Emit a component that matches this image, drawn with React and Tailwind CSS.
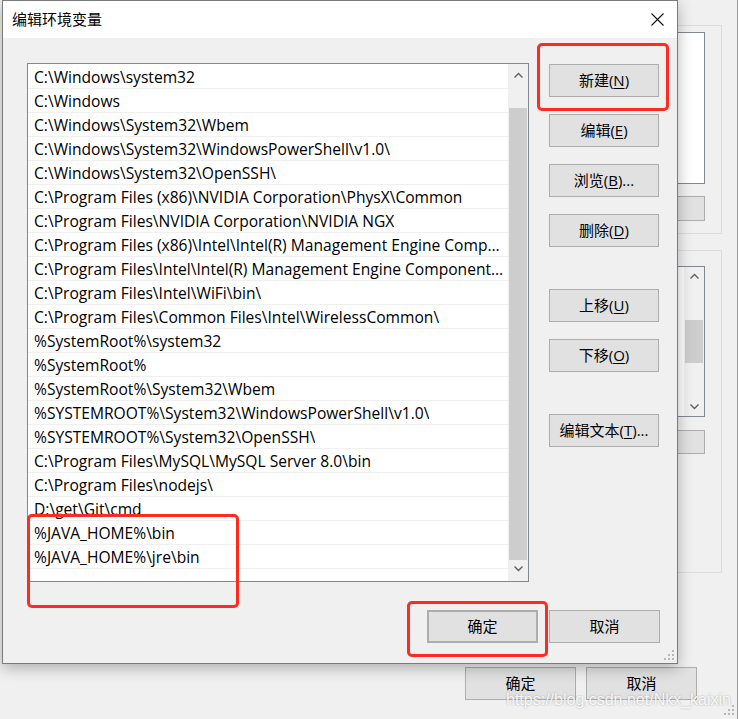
import { useState } from "react";

const paths = [
  "C:\\Windows\\system32",
  "C:\\Windows",
  "C:\\Windows\\System32\\Wbem",
  "C:\\Windows\\System32\\WindowsPowerShell\\v1.0\\",
  "C:\\Windows\\System32\\OpenSSH\\",
  "C:\\Program Files (x86)\\NVIDIA Corporation\\PhysX\\Common",
  "C:\\Program Files\\NVIDIA Corporation\\NVIDIA NGX",
  "C:\\Program Files (x86)\\Intel\\Intel(R) Management Engine Components\\DAL",
  "C:\\Program Files\\Intel\\Intel(R) Management Engine Components\\DAL",
  "C:\\Program Files\\Intel\\WiFi\\bin\\",
  "C:\\Program Files\\Common Files\\Intel\\WirelessCommon\\",
  "%SystemRoot%\\system32",
  "%SystemRoot%",
  "%SystemRoot%\\System32\\Wbem",
  "%SYSTEMROOT%\\System32\\WindowsPowerShell\\v1.0\\",
  "%SYSTEMROOT%\\System32\\OpenSSH\\",
  "C:\\Program Files\\MySQL\\MySQL Server 8.0\\bin",
  "C:\\Program Files\\nodejs\\",
  "D:\\get\\Git\\cmd",
  "%JAVA_HOME%\\bin",
  "%JAVA_HOME%\\jre\\bin",
  "",
];

// chevrons used on the scroll bars
const Chevron = ({ down }) => (
  <svg width="9" height="6" viewBox="0 0 9 6" className="block">
    <polyline
      points={down ? "0.5,0.5 4.5,4.5 8.5,0.5" : "0.5,5.5 4.5,1.5 8.5,5.5"}
      fill="none"
      stroke="#606060"
      strokeWidth="1.4"
    />
  </svg>
);

const Grip = () => (
  <svg width="11" height="11" viewBox="0 0 11 11" className="block">
    <rect x="8" y="0" width="2" height="2" fill="#b8b8b8" />
    <rect x="4" y="4" width="2" height="2" fill="#b8b8b8" />
    <rect x="8" y="4" width="2" height="2" fill="#b8b8b8" />
    <rect x="0" y="8" width="2" height="2" fill="#b8b8b8" />
    <rect x="4" y="8" width="2" height="2" fill="#b8b8b8" />
    <rect x="8" y="8" width="2" height="2" fill="#b8b8b8" />
  </svg>
);

const WinButton = ({ children, className = "" }) => (
  <button
    className={`flex items-center justify-center bg-[#e1e1e1] border border-[#adadad] text-[15px] text-black ${className}`}
  >
    {children}
  </button>
);

const Mn = ({ children }) => <span className="underline underline-offset-2">{children}</span>;

const App = () => {
  const [selected] = useState(null);

  return (
    <div className="relative w-[738px] h-[719px] overflow-hidden bg-[#f0f0f0] font-['Open_Sans','Noto_Sans_CJK_SC',sans-serif]">
      {/* Background window (system properties) */}
      <div className="flex h-full flex-col items-end pr-[15px] pt-[25px] border-r border-[#9a9a9a]">
        <div className="flex w-[320px] h-[209px] flex-col items-end border border-[#dcdcdc] pt-[6px] pr-[16px]">
          <div className="w-[290px] h-[152px] border border-[#828790] bg-white" />
          <div className="mt-[12px] w-[100px] h-[25px] bg-[#e1e1e1] border border-[#adadad]" />
        </div>
        <div className="mt-[16px] flex w-[320px] h-[323px] flex-col items-end border border-[#dcdcdc] pt-[15px] pr-[16px]">
          <div className="flex w-[290px] h-[151px] justify-end border border-[#828790] bg-white">
            <div className="flex w-[20px] flex-col items-center bg-[#f0f0f0]">
              <div className="pt-[6px] h-[17px]">
                <Chevron />
              </div>
              <div className="mt-[36px] w-[18px] h-[43px] bg-[#cdcdcd]" />
              <div className="mt-auto pb-[6px]">
                <Chevron down />
              </div>
            </div>
          </div>
          <div className="mt-[13px] w-[100px] h-[24px] bg-[#e1e1e1] border border-[#adadad]" />
        </div>
        <div className="mt-auto mb-[19px] mr-[25px] flex gap-[10px]">
          <WinButton className="w-[111px] h-[33px]">确定</WinButton>
          <WinButton className="w-[111px] h-[33px]">取消</WinButton>
        </div>
      </div>
      <div className="absolute right-[3px] bottom-[3px]">
        <Grip />
      </div>
      <div className="absolute left-[506px] top-[688px] font-['Liberation_Sans',sans-serif] text-[16px] text-white/90 [text-shadow:0_0_2px_rgba(0,0,0,0.35)]">
        https://blog.csdn.net/Nkx_kaixin
      </div>

      {/* Dialog */}
      <div className="absolute left-[2px] top-0 flex w-[676px] h-[664px] flex-col border border-[#7a7a7a] bg-[#f0f0f0] shadow-[0_4px_14px_rgba(0,0,0,0.28)]">
        <div className="flex h-[37px] items-center justify-between bg-white pl-[9px] pr-[13px]">
          <span className="text-[15px] text-black">编辑环境变量</span>
          <svg width="13" height="13" viewBox="0 0 13 13" className="block">
            <path d="M0.5 0.5 L12.5 12.5 M12.5 0.5 L0.5 12.5" stroke="#111" strokeWidth="1.1" />
          </svg>
        </div>

        <div className="relative flex flex-1 flex-col pl-[24px] pr-[17px] pt-[25px] pb-[20px]">
          <div className="flex gap-[20px]">
            {/* Path list */}
            <div className="flex w-[502px] h-[519px] border border-[#828790] bg-white">
              <div className="flex-1 min-w-0 overflow-hidden pt-[1px]">
                {paths.map((p, i) => (
                  <div
                    key={i}
                    className={`flex h-[24px] items-center border-b border-[#f0f0f0] pl-[6px] pr-[4px] pt-[3px] text-[15.6px] text-black ${
                      selected === i ? "bg-[#cce8ff]" : ""
                    }`}
                  >
                    <span className="truncate">{p}</span>
                  </div>
                ))}
              </div>
              <div className="flex w-[20px] flex-col items-center bg-[#f0f0f0]">
                <div className="pt-[8px] h-[44px]">
                  <Chevron />
                </div>
                <div className="w-[18px] h-[452px] bg-[#cdcdcd]" />
                <div className="pt-[6px]">
                  <Chevron down />
                </div>
              </div>
            </div>

            {/* Action buttons */}
            <div className="flex w-[110px] flex-col pt-[1px]">
              <WinButton className="h-[33px]">
                新建(<Mn>N</Mn>)
              </WinButton>
              <WinButton className="mt-[17px] h-[33px]">
                编辑(<Mn>E</Mn>)
              </WinButton>
              <WinButton className="mt-[17px] h-[33px]">
                浏览(<Mn>B</Mn>)...
              </WinButton>
              <WinButton className="mt-[17px] h-[33px]">
                删除(<Mn>D</Mn>)
              </WinButton>
              <WinButton className="mt-[42px] h-[33px]">
                上移(<Mn>U</Mn>)
              </WinButton>
              <WinButton className="mt-[17px] h-[33px]">
                下移(<Mn>O</Mn>)
              </WinButton>
              <WinButton className="mt-[42px] h-[33px]">
                编辑文本(<Mn>T</Mn>)...
              </WinButton>
            </div>
          </div>

          <div className="mt-auto flex justify-end gap-[11px]">
            <WinButton className="w-[111px] h-[33px] border-2 border-[#0078d7]">确定</WinButton>
            <WinButton className="w-[111px] h-[33px]">取消</WinButton>
          </div>

          <div className="absolute right-[2px] bottom-[2px]">
            <Grip />
          </div>
        </div>
      </div>

      {/* Red annotation boxes */}
      <div className="absolute left-[537px] top-[43px] w-[132px] h-[68px] rounded-[5px] border-[3px] border-[#ff2a20]" />
      <div className="absolute left-[27px] top-[514px] w-[212px] h-[94px] rounded-[5px] border-[3px] border-[#ff2a20]" />
      <div className="absolute left-[407px] top-[601px] w-[141px] h-[56px] rounded-[5px] border-[3px] border-[#ff2a20]" />
    </div>
  );
};

export default App;
